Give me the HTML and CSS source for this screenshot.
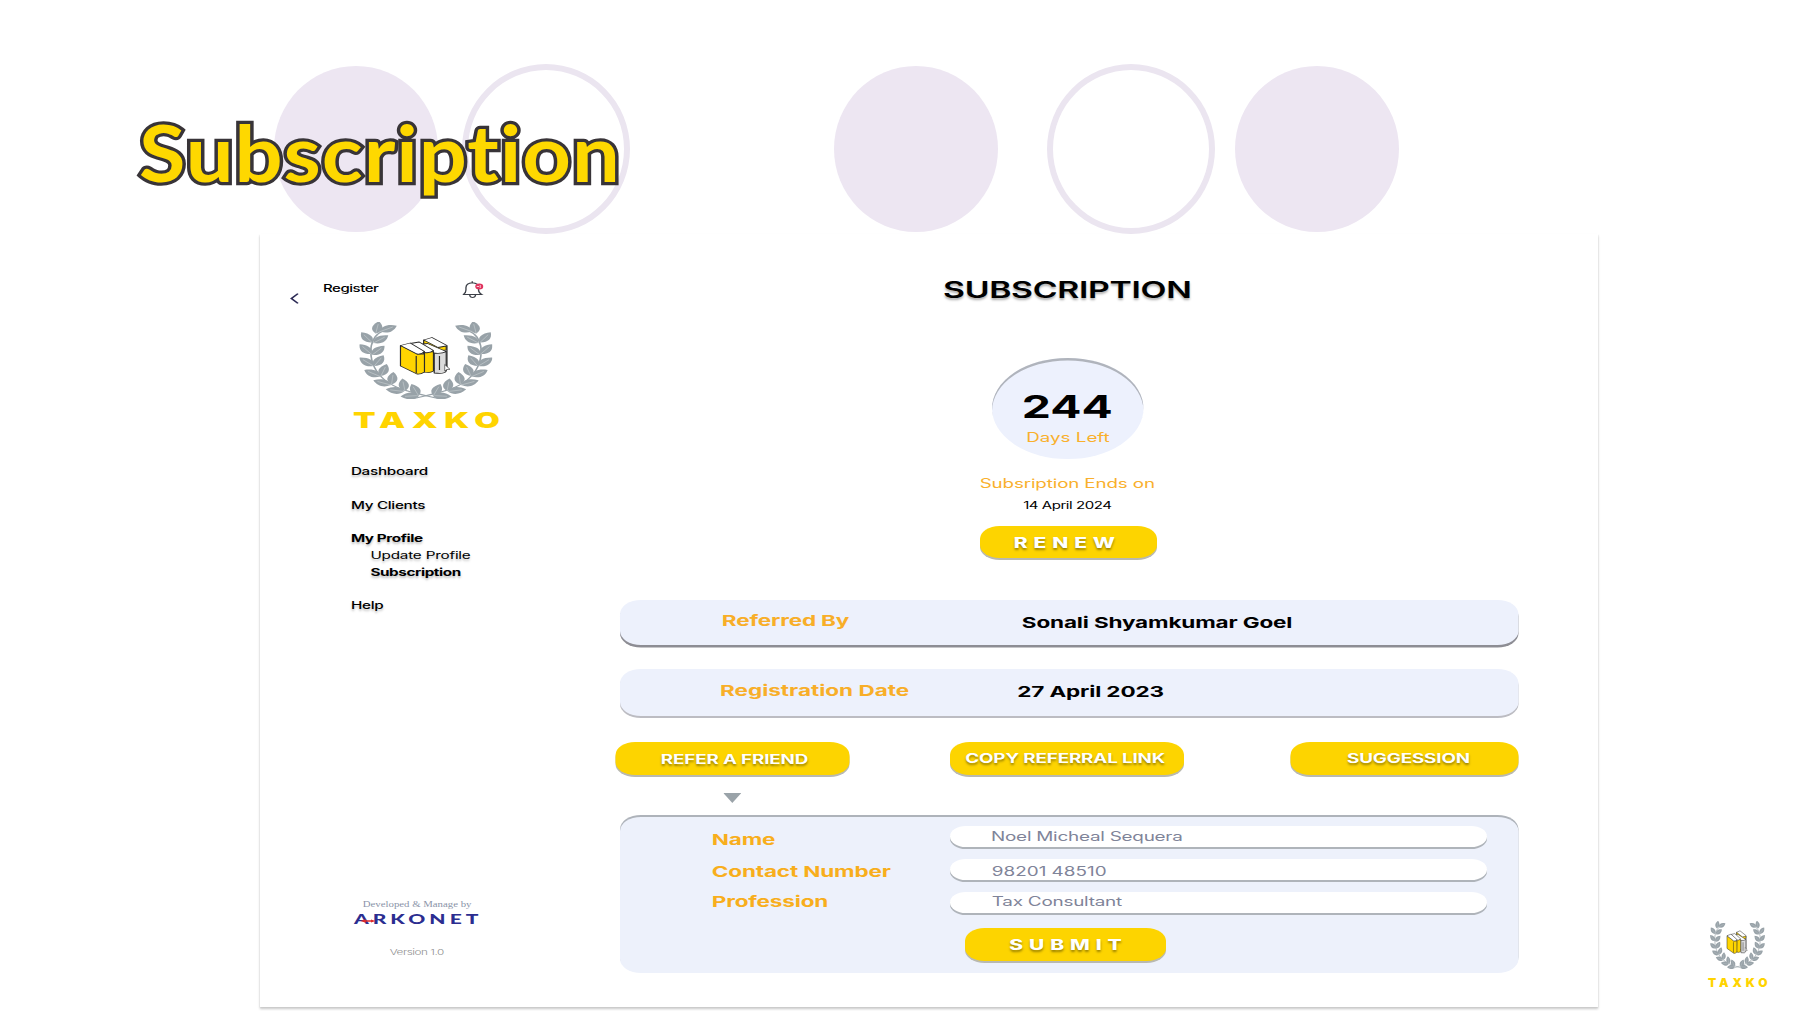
FILE: index.html
```html
<!DOCTYPE html>
<html lang="en">
<head>
<meta charset="utf-8">
<title>Subscription</title>
<link rel="stylesheet" href="styles.css">
</head>
<body>
<svg class="defs" width="0" height="0" aria-hidden="true">
  <defs>
    <g id="leaf"><path d="M0 0C-4.600-3-4.400-8 0-12.500C4.400-8 4.600-3 0 0Z" fill="#98a2a8"/><path d="M0 0V-9.500" stroke="#c3cacd" stroke-width=".5"/></g>
    <g id="branch">
      <path d="M53 76.500C40 72 26 69 17 58C9 48 7 36 8 24C9 17 11 12 17 8" fill="none" stroke="#98a2a8" stroke-width="1.100"/>
      <use href="#leaf" transform="translate(11 11.500) rotate(10)"/>
      <use href="#leaf" transform="translate(8.500 20.500) rotate(-35)"/>
      <use href="#leaf" transform="translate(8 32) rotate(-38)"/>
      <use href="#leaf" transform="translate(9.500 44) rotate(-48)"/>
      <use href="#leaf" transform="translate(14 54.500) rotate(-58)"/>
      <use href="#leaf" transform="translate(21 63) rotate(-68)"/>
      <use href="#leaf" transform="translate(30 69.500) rotate(-80)"/>
      <use href="#leaf" transform="translate(40 73.500) rotate(-95)"/>
      <use href="#leaf" transform="translate(14 9.500) rotate(62)"/>
      <use href="#leaf" transform="translate(9.500 21) rotate(52)"/>
      <use href="#leaf" transform="translate(8.500 33) rotate(42)"/>
      <use href="#leaf" transform="translate(10 44) rotate(30)"/>
      <use href="#leaf" transform="translate(14.500 54) rotate(18)"/>
      <use href="#leaf" transform="translate(21.500 62.500) rotate(6)"/>
      <use href="#leaf" transform="translate(30.500 69) rotate(-8)"/>
      <use href="#leaf" transform="translate(39.500 73.500) rotate(-22)"/>
    </g>
    <symbol id="emblem" viewBox="0 0 89 77">
      <use href="#branch"/>
      <use href="#branch" transform="translate(89 0) scale(-1 1)"/>
      <g stroke="#2b2b2b" stroke-width=".8" stroke-linejoin="round">
        <path d="M43 18L48.500 15.500L58.500 23.500V47L52 48L43 40Z" fill="#fff"/>
        <path d="M43 18L52.500 25.500L58 24V28L52 29L43 23Z" fill="#ffd500"/>
        <path d="M50 31L58 29.500V49Q57 52.500 50 51Z" fill="#dcdcdc"/>
        <path d="M40.500 22.500L45.500 21.500L58 29.500Q55 32 49.500 31Z" fill="#fff"/>
        <path d="M43.500 30L49.500 29.500V49Q47 51.500 43 50Z" fill="#ffd500"/>
        <path d="M34 21.500L40 20L49.500 28.500Q47 31.500 43.500 30.500Z" fill="#fff"/>
        <path d="M27.500 23.500L38.500 32H43.500V50Q41 52.500 38.500 52L27.500 44Z" fill="#ffd500"/>
        <path d="M27.500 23.500L34 21L43.500 29.500Q42 32.500 38.500 32Z" fill="#fff"/>
        <path d="M38 34V51M53.500 34V48" fill="none"/>
        <path d="M57 42.500V49L58.500 47.500L60.500 47.300Z" fill="#fff" stroke-width=".5"/>
      </g>
    </symbol>
  </defs>
</svg>

<div class="slide">
  <header class="banner">
    <i class="disc disc-1"></i><i class="ring ring-1"></i><i class="disc disc-2"></i><i class="ring ring-2"></i><i class="disc disc-3"></i>
    <h1 class="headline">Subscription</h1>
  </header>

  <div class="screen">
    <aside class="sidebar">
      <div class="topline">
        <svg class="back" viewBox="0 0 6 11"><path d="M5.300.6L.9 5.500L5.300 10.400" fill="none" stroke="#2c2a55" stroke-width="1.300"/></svg>
        <span class="register">Register</span>
        <svg class="bell" viewBox="0 0 14 18"><path d="M.6 13.500Q2.300 12 2.300 9V6.500Q2.500 2.300 6.500 1.800Q10.700 2.300 10.700 6.500V9Q10.700 12 12.900 13.500ZM6.500 1.800V.3M4.800 14Q5 16.500 6.700 16.500Q8.500 16.500 8.700 14" fill="none" stroke="#3c4048" stroke-width=".9"/><ellipse cx="11.200" cy="5.500" rx="2.700" ry="3" fill="#e0355f"/><path d="M9.500 5.500H11M11.800 4V7" stroke="#fff" stroke-width=".6"/></svg>
      </div>
      <svg class="emblem"><use href="#emblem"/></svg>
      <div class="brand">TAXKO</div>
      <nav class="menu">
        <a>Dashboard</a>
        <a>My Clients</a>
        <a class="current">My Profile</a>
        <a class="sub">Update Profile</a>
        <a class="sub current">Subscription</a>
        <a>Help</a>
      </nav>
      <footer class="credits">
        <div class="by">Developed &amp; Manage by</div>
        <div class="arkonet">ARKONET<svg class="dart" viewBox="0 0 10 4"><path d="M0 2L3.500.3V1.300H7V.5L10 2L7 3.500V2.700H3.500V3.700Z" fill="#e02b2b"/></svg></div>
        <div class="version">Version 1.0</div>
      </footer>
    </aside>

    <main class="main">
      <h2 class="title">SUBSCRIPTION</h2>
      <div class="counter">
        <div class="days">244</div>
        <div class="left">Days Left</div>
      </div>
      <div class="ends">Subsription Ends on</div>
      <div class="date">14 April 2024</div>
      <button class="btn renew">RENEW</button>

      <div class="info referred">
        <div class="label">Referred By</div>
        <div class="value">Sonali Shyamkumar Goel</div>
      </div>
      <div class="info registered">
        <div class="label">Registration Date</div>
        <div class="value">27 April 2023</div>
      </div>

      <div class="actions">
        <button class="btn refer">REFER A FRIEND</button>
        <button class="btn copy">COPY REFERRAL LINK</button>
        <button class="btn suggest">SUGGESSION</button>
      </div>
      <i class="caret"></i>

      <form class="form">
        <label class="field name"><b>Name</b><span class="box">Noel Micheal Sequera</span></label>
        <label class="field phone"><b>Contact Number</b><span class="box">98201 48510</span></label>
        <label class="field job"><b>Profession</b><span class="box">Tax Consultant</span></label>
        <button class="btn submit">SUBMIT</button>
      </form>
    </main>
  </div>

  <div class="watermark">
    <svg class="mark"><use href="#emblem"/></svg>
    <div class="mark-name">TAXKO</div>
  </div>
</div>
</body>
</html>
```
FILE: styles.css
```css
* { box-sizing: border-box; }
body { margin: 0; background: #fff; font-family: Inter, "Liberation Sans", sans-serif; color: #000; white-space: nowrap; }
h1, h2 { margin: 0; }
button { border: 0; font-family: inherit; padding: 0; }
svg { display: block; flex: none; }
.defs { position: absolute; }

.slide { position: relative; width: 1798px; height: 1011px; overflow: hidden; display: flex; flex-direction: column; }

/* decorative header */
.banner { height: 234px; flex: none; position: relative; overflow: hidden; padding: 102px 0 0 138.500px; }
.disc, .ring { position: absolute; border-radius: 50%; }
.disc { width: 164px; height: 166px; top: 66px; background: #ede6f2; }
.ring { width: 168px; height: 170px; top: 64px; border: 6px solid #ebe5f0; }
.disc-1 { left: 274px; } .ring-1 { left: 462px; } .disc-2 { left: 834px; } .ring-2 { left: 1047px; } .disc-3 { left: 1235px; }
.headline { position: relative; font: 700 78.500px/100px Lato, sans-serif; letter-spacing: .9px; color: #fed800; -webkit-text-stroke: 6.500px #383438; paint-order: stroke fill; transform: scaleX(1.08); transform-origin: 0 0; }

/* app window, laid out at two thirds width and widened */
.screen { margin-left: 259.500px; width: 892.400px; height: 772.500px; flex: none; display: flex; transform: scaleX(1.5); transform-origin: 0 0; background: #fff; box-shadow: 0 2px 2px #c9c9c9, 0 1px 1px #ddd; }

.sidebar { width: 237.200px; flex: none; display: flex; flex-direction: column; }
.topline { display: flex; height: 30px; margin: 43.500px 0 0 20px; }
.back { width: 6px; height: 11px; margin-top: 15.500px; }
.register { font-size: 10px; letter-spacing: -.3px; line-height: 20px; font-weight: 500; margin-left: 16px; width: 36.500px; }
.bell { width: 14px; height: 18px; margin: 3px 0 0 56px; }
.sidebar .emblem { width: 89.300px; height: 77px; margin: 14px 0 0 65.500px; }
.brand { font-size: 22px; letter-spacing: 4.300px; line-height: 26px; font-weight: 900; color: #ffd400; margin: 8px 0 0 62px; }
.menu { margin: 13.800px 0 0 60.600px; font-size: 10.200px; letter-spacing: -.2px; line-height: 16.750px; font-weight: 500; text-shadow: 0 2px 2px #0004; display: flex; flex-direction: column; }
.menu a { margin-top: 16.750px; }
.menu .sub { margin-top: 0; padding-left: 13px; font-weight: 400; letter-spacing: -.14px; }
.menu .current, .menu .sub.current { font-weight: 700; letter-spacing: -.28px; }
.credits { margin-top: auto; padding-bottom: 48.500px; }
.by { font: 7.200px/10px "Liberation Serif", serif; color: #8a93a8; padding-left: 68.500px; }
.arkonet { position: relative; font-size: 14px; letter-spacing: 2.700px; line-height: 18px; font-weight: 900; font-family: Lato, sans-serif; color: #2b2d90; padding-left: 62.600px; }
.dart { position: absolute; left: 67px; top: 9px; width: 10px; height: 4px; }
.version { font-size: 7.800px; letter-spacing: -.3px; line-height: 12px; font-weight: 300; color: #8f8f8f; padding-left: 86.500px; margin-top: 18px; }

.main { width: 602px; flex: none; display: flex; flex-direction: column; align-items: center; text-align: center; }
.title { font-size: 22.500px; letter-spacing: -.2px; line-height: 28px; font-weight: 600; margin-top: 42px; text-shadow: 0 2px 2px #0005; }
.counter { width: 100.700px; height: 101px; border-radius: 50%; background: #edf1fd; margin-top: 54px; padding-top: 34.300px; box-shadow: inset 0 2.500px 0 #b0b4bc; }
.days { font-size: 30.800px; line-height: 30px; font-weight: 700; }
.left, .ends { font-size: 12.500px; line-height: 16px; color: #f9b02c; }
.left { margin-top: 8px; padding-left: 1px; }
.ends { margin-top: 16.500px; letter-spacing: -.08px; }
.date { font-size: 10px; letter-spacing: -.3px; line-height: 14px; margin-top: 6.200px; }

.btn { background: #fdd400; border-radius: 13px; color: #fff; font-weight: 700; font-size: 12.500px; text-shadow: 0 1.500px 2px #0006; box-shadow: 0 2px 0 #b9b9b0; height: 33.500px; flex: none; text-align: left; }
.renew, .submit { font-size: 14px; letter-spacing: 3.900px; font-weight: 800; }
.renew { width: 118px; margin: 14.300px 0 0 .7px; height: 32.500px; padding: 1px 0 0 23px; }

.info { width: 599.300px; margin-left: 2.700px; background: #edf1fc; border-radius: 14px; display: flex; align-items: center; font-size: 15px; letter-spacing: -.1px; font-weight: 700; text-align: left; flex: none; }
.label { color: #f8ae28; width: 200px; }
.referred { margin-top: 41.500px; height: 45px; box-shadow: 0 2.500px 0 #8d8d94; padding-left: 68px; }
.registered { margin-top: 24.500px; height: 46.500px; box-shadow: 0 2px 0 #bcbcc2; padding-left: 66.800px; }
.registered .label { width: 198.200px; letter-spacing: 0; }
.info .label { padding-bottom: 4px; }
.registered .value { padding-bottom: 1.500px; }

.actions { width: 602px; display: flex; margin-top: 26px; }
.actions .btn { letter-spacing: -.08px; }
.actions .refer { width: 155.500px; padding: 2px 0 0 30px; }
.copy { width: 156px; margin-left: 67.500px; padding-left: 10px; }
.suggest { width: 152.500px; margin-left: auto; padding-left: 38px; }
.caret { width: 12px; height: 10px; background: #9aa3a9; clip-path: polygon(0 0, 100% 0, 50% 100%); margin: 17.500px 0 0 71.700px; align-self: flex-start; flex: none; }

.form { width: 599.300px; margin: 14px 0 0 2.700px; height: 156px; background: #edf1fb; border-radius: 14px; box-shadow: 0 -2px 0 #aeb3ba; padding-top: 9px; text-align: left; flex: none; }
.field { display: flex; height: 21px; align-items: center; padding-left: 61.300px; margin-bottom: 12px; }
.field b { width: 158.700px; color: #f8ae1c; font-size: 15px; letter-spacing: -.1px; line-height: 20px; }
.box { width: 358px; height: 21px; line-height: 21px; border-radius: 11px; background: #fff; box-shadow: 0 2px 0 #afb4ba; color: #7f8499; font-size: 12.600px; letter-spacing: -.16px; padding-left: 27.500px; }
.name b { padding-top: 6px; line-height: 21px; }
.phone b { padding-top: 5px; line-height: 20px; }
.phone .box { line-height: 26px; letter-spacing: 0; padding-left: 28px; }
.job .box { line-height: 20px; padding-left: 28px; }
.submit { display: block; width: 134px; height: 33px; margin: 15px 0 0 229.700px; padding-left: 30px; }

.watermark { position: absolute; left: 1708px; top: 921px; width: 62px; }
.mark { width: 55px; height: 48px; margin-left: 2px; }
.mark-name { font-size: 12px; letter-spacing: 3.900px; line-height: 14px; font-weight: 900; color: #ffd400; margin-top: 7px; }
```
